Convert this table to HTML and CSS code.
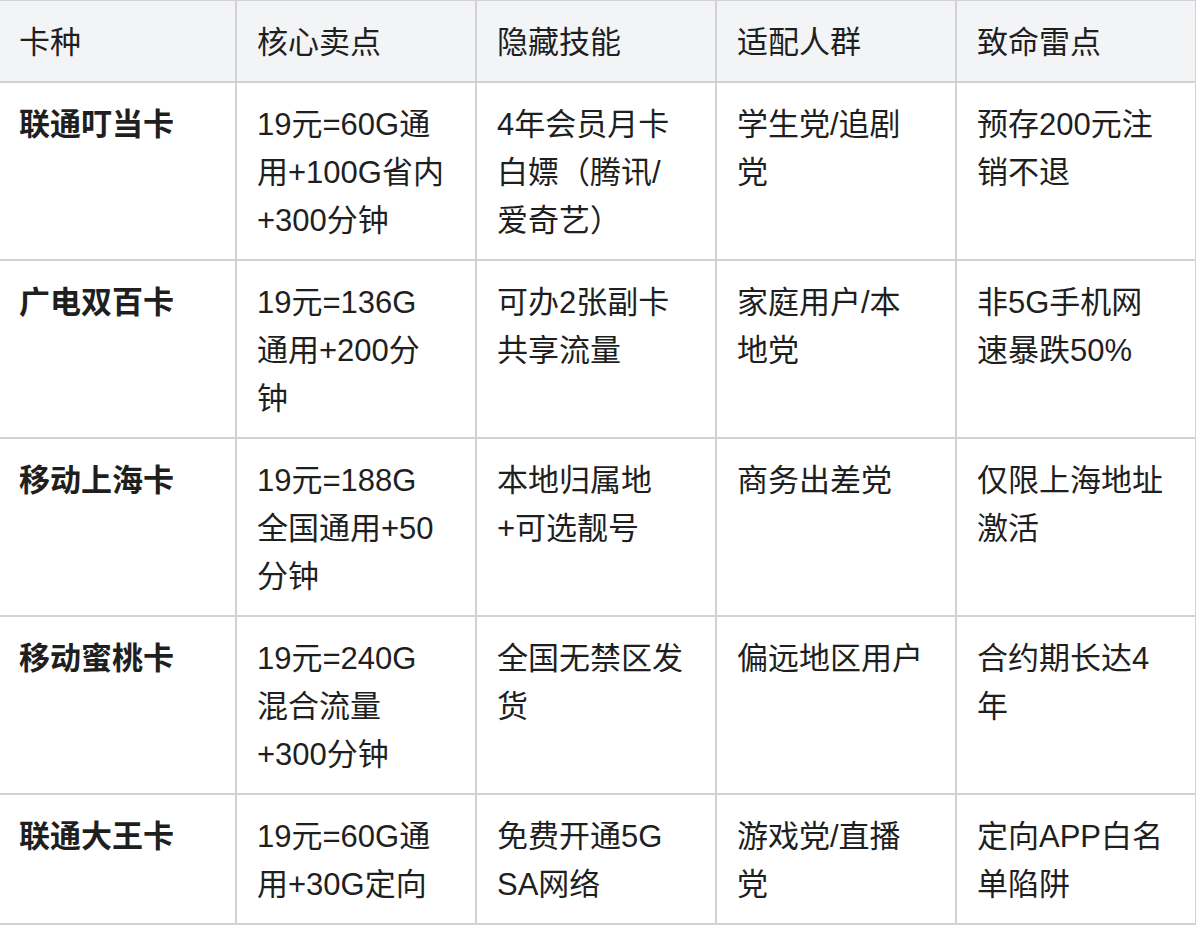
FILE: index.html
```html
<!DOCTYPE html>
<html lang="zh-CN">
<head>
<meta charset="utf-8">
<title>卡种对比</title>
<link rel="stylesheet" href="styles.css">
</head>
<body>
<table class="cards">
  <colgroup>
    <col class="c-name">
    <col class="c-col">
    <col class="c-col">
    <col class="c-col">
    <col class="c-col">
  </colgroup>
  <thead>
    <tr>
      <th>卡种</th>
      <th>核心卖点</th>
      <th>隐藏技能</th>
      <th>适配人群</th>
      <th>致命雷点</th>
    </tr>
  </thead>
  <tbody>
    <tr>
      <td class="name">联通叮当卡</td>
      <td>19元=60G通用+100G省内+300分钟</td>
      <td>4年会员月卡白嫖（腾讯/爱奇艺）</td>
      <td>学生党/追剧党</td>
      <td>预存200元注销不退</td>
    </tr>
    <tr>
      <td class="name">广电双百卡</td>
      <td>19元=136G通用+200分钟</td>
      <td>可办2张副卡共享流量</td>
      <td>家庭用户/本地党</td>
      <td>非5G手机网速暴跌50%</td>
    </tr>
    <tr>
      <td class="name">移动上海卡</td>
      <td>19元=188G全国通用+50分钟</td>
      <td>本地归属地+可选靓号</td>
      <td>商务出差党</td>
      <td>仅限上海地址激活</td>
    </tr>
    <tr>
      <td class="name">移动蜜桃卡</td>
      <td>19元=240G混合流量+300分钟</td>
      <td>全国无禁区发货</td>
      <td>偏远地区用户</td>
      <td>合约期长达4年</td>
    </tr>
    <tr>
      <td class="name">联通大王卡</td>
      <td>19元=60G通用+30G定向</td>
      <td>免费开通5G SA网络</td>
      <td>游戏党/直播党</td>
      <td>定向APP白名单陷阱</td>
    </tr>
  </tbody>
</table>
</body>
</html>
```
FILE: styles.css
```css
html, body {
  margin: 0;
  padding: 0;
  background: #ffffff;
}

body {
  font-family: "Liberation Sans", "Noto Sans CJK SC", sans-serif;
  font-size: 31px;
  line-height: 48px;
  color: #1f1f1f;
}

.cards {
  border-collapse: collapse;
  table-layout: fixed;
  width: 1200px;
  margin: -1px 0 0 -3px;
}

.c-name {
  width: 238px;
}

.c-col {
  width: 240px;
}

.cards th,
.cards td {
  border: 2px solid #d1d1d6;
  padding: 18px 29px 14px 20px;
  text-align: left;
  vertical-align: top;
  word-break: normal;
  overflow-wrap: break-word;
}

.cards th {
  background: #f3f4f6;
  font-weight: 400;
}

.cards td.name {
  font-weight: 700;
}
```
